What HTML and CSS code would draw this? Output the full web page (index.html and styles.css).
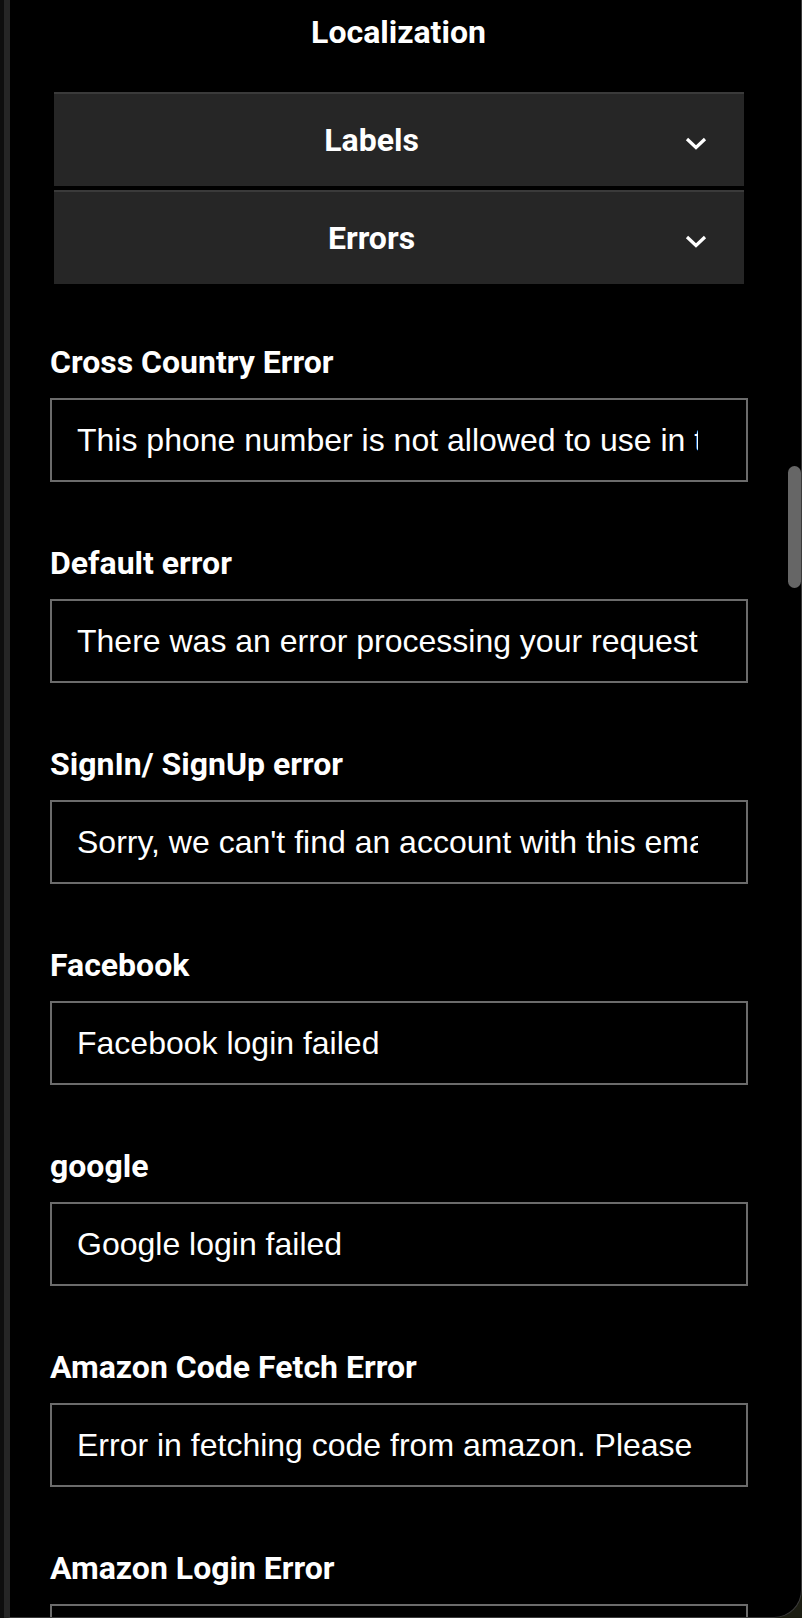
FILE: index.html
```html
<!DOCTYPE html>
<html lang="en">
<head>
    <meta charset="UTF-8">
    <meta name="viewport" content="width=device-width, initial-scale=1.0">
    <title>Localization</title>
    <link rel="stylesheet" href="styles.css">
</head>
<body>
    <div class="edge"></div>
    <div id="panel">
        <h2 class="title">Localization</h2>
        <div class="accordion">
            <div class="acc-header">
                <span class="acc-title">Labels</span>
                <svg class="chevron" width="22" height="13" viewBox="0 0 22 13"><path d="M2 2 L11 10.5 L20 2" fill="none" stroke="#fff" stroke-width="3.2"/></svg>
            </div>
            <div class="acc-header">
                <span class="acc-title">Errors</span>
                <svg class="chevron" width="22" height="13" viewBox="0 0 22 13"><path d="M2 2 L11 10.5 L20 2" fill="none" stroke="#fff" stroke-width="3.2"/></svg>
            </div>
        </div>
        <div class="fields">
            <div class="field">
                <label>Cross Country Error</label>
                <input type="text" value="This phone number is not allowed to use in this country">
            </div>
            <div class="field">
                <label>Default error</label>
                <input type="text" value="There was an error processing your request">
            </div>
            <div class="field">
                <label>SignIn/ SignUp error</label>
                <input type="text" value="Sorry, we can't find an account with this email address">
            </div>
            <div class="field">
                <label>Facebook</label>
                <input type="text" value="Facebook login failed">
            </div>
            <div class="field">
                <label>google</label>
                <input type="text" value="Google login failed">
            </div>
            <div class="field">
                <label>Amazon Code Fetch Error</label>
                <input type="text" value="Error in fetching code from amazon. Please try again">
            </div>
            <div class="field">
                <label>Amazon Login Error</label>
                <input type="text" value="Amazon login failed">
            </div>
        </div>
        <div class="scroll-thumb"></div>
    </div>
</body>
</html>
```

FILE: styles.css
```css
html, body {
    height: 100%;
}
body {
    margin: 0;
    background-color: #1c1d12;
    color: #fff;
    font-family: Roboto, Arial, sans-serif;
    display: flex;
    overflow: hidden;
}
.edge {
    width: 4px;
    flex-shrink: 0;
    background-color: #0e0e0e;
}
#panel {
    position: relative;
    flex: 1;
    height: 1618px;
    box-sizing: border-box;
    background-color: #000;
    border-left: 6px solid #262626;
    border-right: 1px solid #3a3a3a;
    border-bottom: 1px solid #3a3a3a;
    border-bottom-right-radius: 28px;
    overflow: hidden;
}
.title {
    margin: 14px 0 0;
    padding-right: 14px;
    height: 36px;
    line-height: 36px;
    font-size: 32px;
    font-weight: bold;
    text-align: center;
}
.accordion {
    margin: 42px 0 0 44px;
    width: 690px;
    display: flex;
    flex-direction: column;
    gap: 4px;
}
.acc-header {
    height: 92px;
    display: flex;
    align-items: center;
    background-color: #262626;
    border-top: 2px solid #3a3a3a;
    padding-left: 4px;
}
.acc-title {
    flex: 1;
    text-align: center;
    font-size: 32px;
    font-weight: bold;
}
.chevron {
    margin: 6px 37px 0 0;
}
.fields {
    padding: 60px 0 0 40px;
}
.field {
    display: flex;
    flex-direction: column;
    width: 698px;
    margin-bottom: 63px;
}
.field label {
    height: 36px;
    line-height: 36px;
    font-size: 32px;
    font-weight: bold;
    margin-bottom: 18px;
}
.field input {
    box-sizing: border-box;
    height: 84px;
    width: 698px;
    padding: 0 48px 0 25px;
    background-color: #000;
    border: 2px solid #6b6b6b;
    border-radius: 0;
    color: #fff;
    font-family: "Liberation Sans", Arial, sans-serif;
    font-size: 32px;
    outline: none;
}
.scroll-thumb {
    position: absolute;
    top: 466px;
    right: 0;
    width: 13px;
    height: 122px;
    border-radius: 7px;
    background-color: #666;
}
```
